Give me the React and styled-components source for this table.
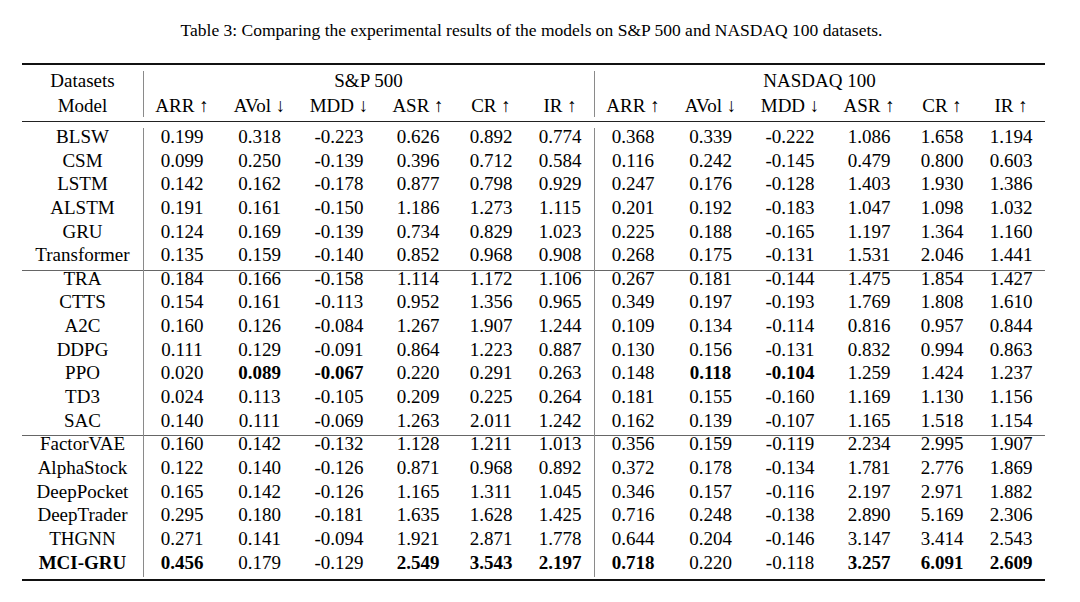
import styled, { createGlobalStyle } from 'styled-components';

const GlobalStyle = createGlobalStyle`
  html, body {
    margin: 0;
    background: #fff;
  }
  body {
    font-family: "Liberation Serif", "Times New Roman", serif;
    color: #000;
  }
`;

const Page = styled.div`
  width: 1023px;
  margin-left: 22px;
  padding-top: 20px;
`;

const Caption = styled.p`
  margin: 0 4px 23px 0;
  font-size: 17.5px;
  line-height: 20px;
  text-align: center;
`;

/* top and bottom booktabs rules */
const TableFrame = styled.div`
  border-top: 2px solid #111;
  border-bottom: 2px solid #111;
  padding: 6px 0 2px;
`;

const Table = styled.table`
  width: 100%;
  table-layout: fixed;
  border-collapse: collapse;
  font-size: 19px;
`;

const Col = styled.col`
  width: ${(p) => p.$w}px;
`;

const Row = styled.tr`
  background: ${(p) =>
    p.$rule ? 'linear-gradient(#666, #666) left top / 100% 1px no-repeat' : 'none'};
`;

const Cell = styled.td`
  padding: ${(p) => (p.$head === 1 ? '0' : p.$head === 2 ? '3px 0 0' : '0 0 6.65px')};
  line-height: ${(p) => (p.$head === 1 ? '20px' : p.$head === 2 ? '23px' : '17px')};
  text-align: center;
  white-space: nowrap;
  font-weight: ${(p) => (p.$bold ? 700 : 400)};
  background: ${(p) =>
    p.$divider ? 'linear-gradient(#8a8a8a, #8a8a8a) left top / 1px 100% no-repeat' : 'none'};
`;

const MidRuleCell = styled.td`
  padding: 4px 0 6px;
  line-height: 0;
`;

const Rule = styled.div`
  height: 1px;
  background: #222;
`;

const widths = [121, 78, 77, 82, 76, 70, 68, 78, 77, 82, 76, 70, 68];
const metrics = ['ARR ↑', 'AVol ↓', 'MDD ↓', 'ASR ↑', 'CR ↑', 'IR ↑'];

// "*" marks a bold value
const groups = [
  [
    'BLSW 0.199 0.318 -0.223 0.626 0.892 0.774 0.368 0.339 -0.222 1.086 1.658 1.194',
    'CSM 0.099 0.250 -0.139 0.396 0.712 0.584 0.116 0.242 -0.145 0.479 0.800 0.603',
    'LSTM 0.142 0.162 -0.178 0.877 0.798 0.929 0.247 0.176 -0.128 1.403 1.930 1.386',
    'ALSTM 0.191 0.161 -0.150 1.186 1.273 1.115 0.201 0.192 -0.183 1.047 1.098 1.032',
    'GRU 0.124 0.169 -0.139 0.734 0.829 1.023 0.225 0.188 -0.165 1.197 1.364 1.160',
    'Transformer 0.135 0.159 -0.140 0.852 0.968 0.908 0.268 0.175 -0.131 1.531 2.046 1.441',
  ],
  [
    'TRA 0.184 0.166 -0.158 1.114 1.172 1.106 0.267 0.181 -0.144 1.475 1.854 1.427',
    'CTTS 0.154 0.161 -0.113 0.952 1.356 0.965 0.349 0.197 -0.193 1.769 1.808 1.610',
    'A2C 0.160 0.126 -0.084 1.267 1.907 1.244 0.109 0.134 -0.114 0.816 0.957 0.844',
    'DDPG 0.111 0.129 -0.091 0.864 1.223 0.887 0.130 0.156 -0.131 0.832 0.994 0.863',
    'PPO 0.020 *0.089 *-0.067 0.220 0.291 0.263 0.148 *0.118 *-0.104 1.259 1.424 1.237',
    'TD3 0.024 0.113 -0.105 0.209 0.225 0.264 0.181 0.155 -0.160 1.169 1.130 1.156',
    'SAC 0.140 0.111 -0.069 1.263 2.011 1.242 0.162 0.139 -0.107 1.165 1.518 1.154',
  ],
  [
    'FactorVAE 0.160 0.142 -0.132 1.128 1.211 1.013 0.356 0.159 -0.119 2.234 2.995 1.907',
    'AlphaStock 0.122 0.140 -0.126 0.871 0.968 0.892 0.372 0.178 -0.134 1.781 2.776 1.869',
    'DeepPocket 0.165 0.142 -0.126 1.165 1.311 1.045 0.346 0.157 -0.116 2.197 2.971 1.882',
    'DeepTrader 0.295 0.180 -0.181 1.635 1.628 1.425 0.716 0.248 -0.138 2.890 5.169 2.306',
    'THGNN 0.271 0.141 -0.094 1.921 2.871 1.778 0.644 0.204 -0.146 3.147 3.414 2.543',
    '*MCI-GRU *0.456 0.179 -0.129 *2.549 *3.543 *2.197 *0.718 0.220 -0.118 *3.257 *6.091 *2.609',
  ],
];

const DataRow = ({ line, rule }) => {
  const cells = line.split(' ');
  return (
    <Row $rule={rule}>
      {cells.map((c, i) => (
        <Cell key={i} $bold={c.startsWith('*')} $divider={i === 1 || i === 7}>
          {c.replace('*', '')}
        </Cell>
      ))}
    </Row>
  );
};

export default function App() {
  return (
    <Page>
      <GlobalStyle />
      <Caption>
        Table 3: Comparing the experimental results of the models on S&amp;P 500 and NASDAQ 100 datasets.
      </Caption>
      <TableFrame>
        <Table>
          <colgroup>
            {widths.map((w, i) => (
              <Col key={i} $w={w} />
            ))}
          </colgroup>
          <thead>
            <Row>
              <Cell $head={1}>Datasets</Cell>
              <Cell $head={1} colSpan={6} $divider>
                S&amp;P 500
              </Cell>
              <Cell $head={1} colSpan={6} $divider>
                NASDAQ 100
              </Cell>
            </Row>
            <Row>
              <Cell $head={2}>Model</Cell>
              {[...metrics, ...metrics].map((m, i) => (
                <Cell key={i} $head={2} $divider={i === 0 || i === 6}>
                  {m}
                </Cell>
              ))}
            </Row>
            <tr>
              <MidRuleCell colSpan={13}>
                <Rule />
              </MidRuleCell>
            </tr>
          </thead>
          <tbody>
            {groups.map((g, gi) =>
              g.map((line, li) => (
                <DataRow key={`${gi}-${li}`} line={line} rule={gi > 0 && li === 0} />
              ))
            )}
          </tbody>
        </Table>
      </TableFrame>
    </Page>
  );
}
